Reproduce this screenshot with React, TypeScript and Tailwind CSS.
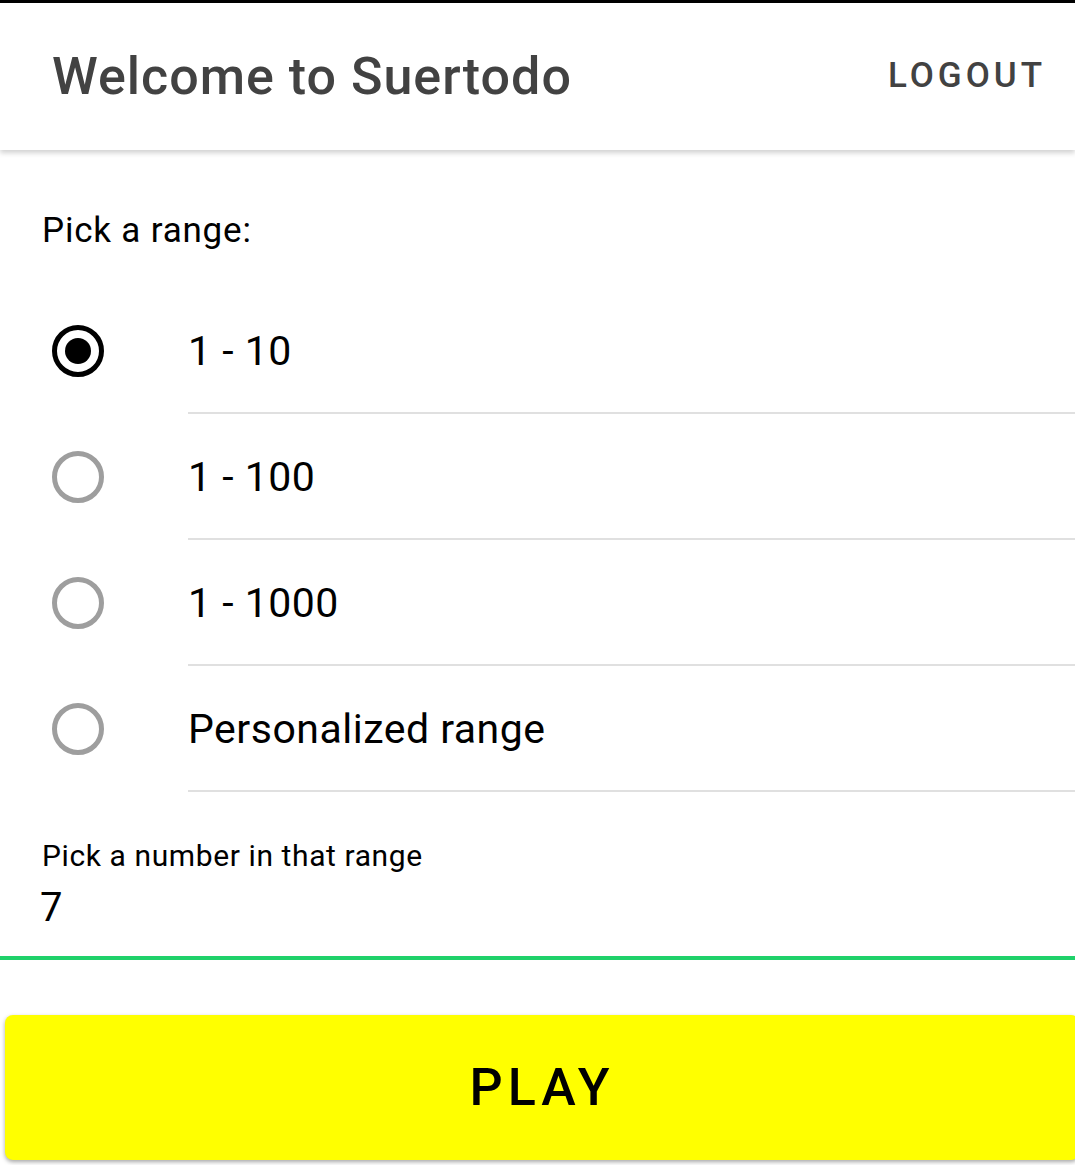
const ranges = ["1 - 10", "1 - 100", "1 - 1000", "Personalized range"]

function Radio({ checked }: { checked: boolean }) {
    return (
        <svg width="56" height="56" viewBox="0 0 56 56">
            <circle cx="28" cy="28" r="23.5" fill="none" stroke={checked ? "#000" : "#9e9e9e"} strokeWidth="5" />
            {checked && <circle cx="28" cy="28" r="13" fill="#000" />}
        </svg>
    )
}

export default function App() {
    return (
        <div className="w-[1075px] h-[1165px] bg-white overflow-hidden font-['Roboto',sans-serif] text-black">
            {/* Barra superior */}
            <div className="border-t-[3px] border-black">
                <div className="relative z-10 flex h-[147px] items-center justify-between bg-white pl-[52px] pr-[29px] shadow-[0_3px_5px_rgba(0,0,0,0.18)]">
                    <h1 className="text-[52px] font-medium tracking-[1px] text-[#424242]">Welcome to Suertodo</h1>
                    <button className="text-[35px] font-medium tracking-[4px] text-[#424242]">LOGOUT</button>
                </div>
            </div>

            <div className="pt-[61px] pl-[42px] text-[35px] leading-[40px] tracking-[0.8px]">Pick a range:</div>

            {/* Opciones */}
            <div className="mt-[37px]">
                {ranges.map((r, i) => (
                    <div key={r} className="flex">
                        <div className="flex w-[188px] items-center pl-[50px]">
                            <Radio checked={i === 0} />
                        </div>
                        <div className="flex h-[126px] flex-1 items-center border-b-2 border-[#e0e0e0] pt-[3px] text-[41px] tracking-[0.5px]">
                            {r}
                        </div>
                    </div>
                ))}
            </div>

            {/* Campo numero */}
            <div className="mt-[47px] border-b-4 border-[#1fd16a]">
                <div className="pl-[42px] text-[30px] leading-[34px] tracking-[0.6px]">Pick a number in that range</div>
                <div className="mt-[12px] pb-[25px] pl-[40px] text-[40px] leading-[46px]">7</div>
            </div>

            <div className="mt-[55px] pl-[5px]">
                <button className="flex h-[145px] w-[1074px] items-center justify-center rounded-[8px] bg-[#ffff00] text-[52px] font-medium tracking-[5px] shadow-[0_2px_4px_rgba(0,0,0,0.35)]">
                    PLAY
                </button>
            </div>
        </div>
    )
}
